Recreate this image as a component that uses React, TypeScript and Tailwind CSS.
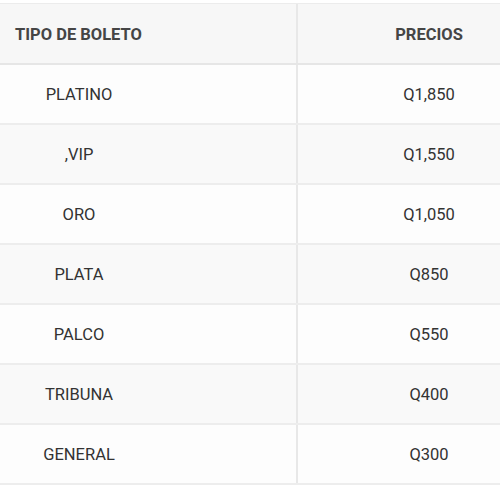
const rows = [
  { tipo: "PLATINO", precio: "Q1,850" },
  { tipo: ",VIP", precio: "Q1,550" },
  { tipo: "ORO", precio: "Q1,050" },
  { tipo: "PLATA", precio: "Q850" },
  { tipo: "PALCO", precio: "Q550" },
  { tipo: "TRIBUNA", precio: "Q400" },
  { tipo: "GENERAL", precio: "Q300" },
];

export default function App() {
  return (
    <div className="w-[500px] h-[500px] overflow-hidden bg-white pt-[3px] font-['Roboto',sans-serif]">
      <div className="w-[560px]">
        {/* Header */}
        <div className="flex h-[62px] bg-[#f7f7f7] border-t border-[#ececec] border-b-2 border-b-[#e6e6e6] shadow-[0_2px_3px_rgba(0,0,0,0.06)] text-[16.5px] font-bold text-[#454545]">
          <div className="w-[298px] flex items-center pl-[15px] pt-[4px] border-r-2 border-[#e8e8e8]">
            TIPO DE BOLETO
          </div>
          <div className="flex-1 flex items-center justify-center pt-[4px]">PRECIOS</div>
        </div>

        {/* Rows */}
        {rows.map((r, i) => (
          <div
            key={r.tipo}
            className={`flex h-[60px] border-b-2 border-[#ededed] text-[16.5px] text-[#333] ${
              i % 2 === 1 ? "bg-[#f9f9f9]" : "bg-[#fdfdfd]"
            }`}
          >
            <div className="w-[298px] flex items-center pl-[15px] pt-[3px] border-r-2 border-[#e8e8e8]">
              <span className="w-[128px] text-center">{r.tipo}</span>
            </div>
            <div className="flex-1 flex items-center justify-center pt-[3px]">{r.precio}</div>
          </div>
        ))}
      </div>
    </div>
  );
}
